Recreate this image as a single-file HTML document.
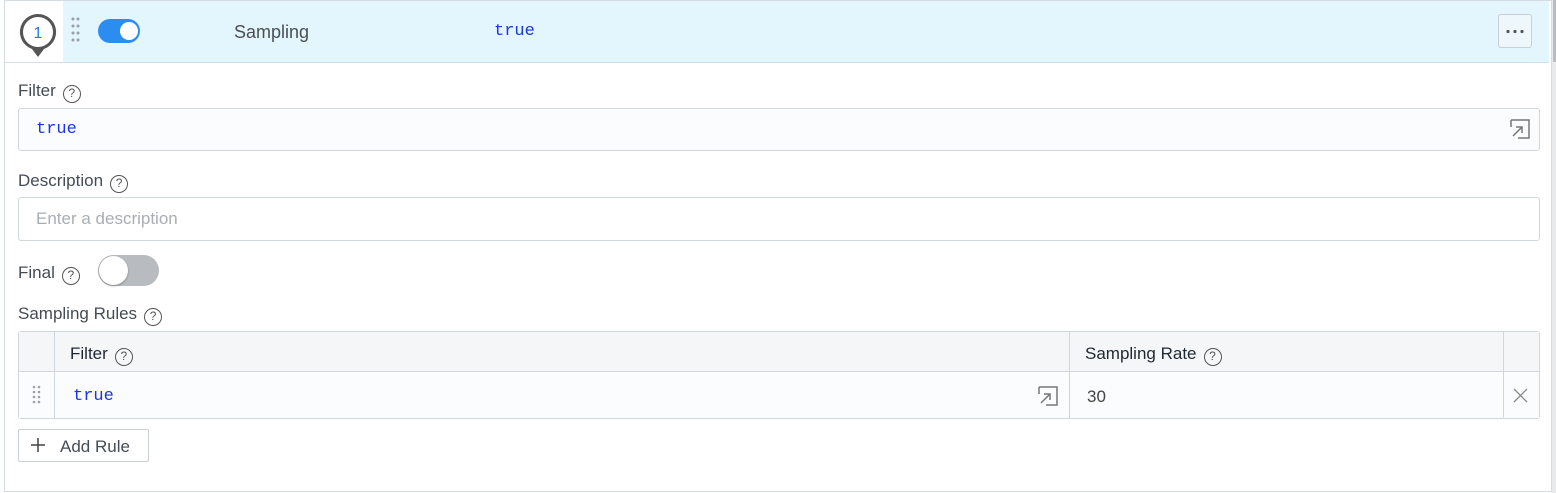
<!DOCTYPE html>
<html><head><style>
*{box-sizing:border-box;margin:0;padding:0}
body{width:1556px;height:493px;background:#fff;font-family:"Liberation Sans",sans-serif;position:relative;overflow:hidden;color:#404850}
.a{position:absolute}
.lbl{font-size:17px;color:#444c55}
.q{display:inline-block;width:18px;height:18px;border:1.4px solid #555;border-radius:50%;font-size:12px;text-align:center;line-height:15px;color:#555;vertical-align:-1px;margin-left:7px}
.inp{border:1px solid #cfd6dc;border-radius:3px;background:#fbfcfe}
.mono{font-family:"Liberation Mono",monospace;color:#1a36e0;font-size:17px}
</style></head><body>
<div class="a" style="left:4px;top:0;width:1548px;height:492px;border:1px solid #d4dbe1"></div>
<div class="a" style="left:1552px;top:0;width:4px;height:493px;background:#e8eaec"></div>
<div class="a" style="left:1553px;top:0;width:3px;height:62px;background:#b9bdc1"></div>
<div class="a" style="left:63px;top:1px;width:1486px;height:62px;background:#e3f5fd;border-bottom:1px solid #cfe0ea"></div>
<div class="a" style="left:4px;top:62px;width:59px;height:1px;background:#d4dbe1"></div>
<svg class="a" style="left:18px;top:13px" width="40" height="48" viewBox="0 0 40 48"><path d="M20 1a18 18 0 0 1 6 35l-6 8-6-8A18 18 0 0 1 20 1z" fill="#555"/><circle cx="20" cy="19" r="15" fill="#fff"/><text x="20" y="25" font-size="16" text-anchor="middle" fill="#2979d8" font-family="Liberation Sans">1</text></svg>
<svg class="a" style="left:71px;top:17px" width="10" height="28"><g fill="#9aa0a6"><circle cx="2" cy="2" r="1.5"/><circle cx="7" cy="2" r="1.5"/><circle cx="2" cy="9" r="1.5"/><circle cx="7" cy="9" r="1.5"/><circle cx="2" cy="16" r="1.5"/><circle cx="7" cy="16" r="1.5"/><circle cx="2" cy="23" r="1.5"/><circle cx="7" cy="23" r="1.5"/></g></svg>
<div class="a" style="left:98px;top:19px;width:42px;height:24px;border-radius:12px;background:#2d8cf0"></div>
<div class="a" style="left:120px;top:22px;width:18px;height:18px;border-radius:50%;background:#fff"></div>
<div class="a lbl" style="left:234px;top:22px;font-size:18px;color:#4a4f55">Sampling</div>
<div class="a mono" style="left:494px;top:22px">true</div>
<div class="a" style="left:1498px;top:14px;width:34px;height:34px;border:1px solid #c8ced3;border-radius:3px;background:#eef7fc"></div>
<svg class="a" style="left:1505px;top:29px" width="20" height="5"><g fill="#555"><circle cx="3" cy="2.5" r="1.6"/><circle cx="10" cy="2.5" r="1.6"/><circle cx="17" cy="2.5" r="1.6"/></g></svg>

<div class="a lbl" style="left:18px;top:81px">Filter<span class="q">?</span></div>
<div class="a inp" style="left:18px;top:108px;width:1522px;height:43px"></div>
<div class="a mono" style="left:36px;top:120px">true</div>
<svg class="a" style="left:1509px;top:118px" width="22" height="22"><path d="M2 2h18v18H9M2 2v7M4 18l9-9M7 9h6v6" fill="none" stroke="#777" stroke-width="1.5"/></svg>

<div class="a lbl" style="left:18px;top:171px">Description<span class="q">?</span></div>
<div class="a inp" style="left:18px;top:197px;width:1522px;height:44px;background:#fff"></div>
<div class="a" style="left:36px;top:209px;font-size:17px;color:#a8aeb4">Enter a description</div>

<div class="a lbl" style="left:18px;top:263px">Final<span class="q">?</span></div>
<div class="a" style="left:98px;top:255px;width:61px;height:31px;border-radius:16px;background:#b8bcc0"></div>
<div class="a" style="left:99px;top:256px;width:29px;height:29px;border-radius:50%;background:#fff;box-shadow:0 1px 2px rgba(0,0,0,.3)"></div>

<div class="a lbl" style="left:18px;top:304px">Sampling Rules<span class="q">?</span></div>
<div class="a" style="left:18px;top:331px;width:1522px;height:88px;border:1px solid #cfd6dc;border-radius:3px"></div>
<div class="a" style="left:19px;top:332px;width:1520px;height:40px;background:#f4f6f8;border-bottom:1px solid #cfd6dc"></div>
<div class="a" style="left:19px;top:373px;width:1520px;height:45px;background:#fbfcfe"></div>
<div class="a" style="left:54px;top:332px;width:1px;height:86px;background:#cfd6dc"></div>
<div class="a" style="left:1069px;top:332px;width:1px;height:86px;background:#cfd6dc"></div>
<div class="a" style="left:1503px;top:332px;width:1px;height:86px;background:#cfd6dc"></div>
<div class="a lbl" style="left:70px;top:344px;color:#1e2834">Filter<span class="q">?</span></div>
<div class="a lbl" style="left:1085px;top:344px;color:#1e2834">Sampling Rate<span class="q">?</span></div>
<svg class="a" style="left:32px;top:385px" width="10" height="22"><g fill="#9aa0a6"><circle cx="2" cy="2" r="1.3"/><circle cx="7" cy="2" r="1.3"/><circle cx="2" cy="7" r="1.3"/><circle cx="7" cy="7" r="1.3"/><circle cx="2" cy="12" r="1.3"/><circle cx="7" cy="12" r="1.3"/><circle cx="2" cy="17" r="1.3"/><circle cx="7" cy="17" r="1.3"/></g></svg>
<div class="a mono" style="left:73px;top:387px">true</div>
<svg class="a" style="left:1037px;top:385px" width="22" height="22"><path d="M2 2h18v18H9M2 2v7M4 18l9-9M7 9h6v6" fill="none" stroke="#777" stroke-width="1.5"/></svg>
<div class="a" style="left:1087px;top:387px;font-size:17px;color:#444">30</div>
<svg class="a" style="left:1513px;top:388px" width="15" height="15"><path d="M1 1l13 13M14 1L1 14" stroke="#888" stroke-width="1.3"/></svg>

<div class="a" style="left:18px;top:429px;width:131px;height:33px;border:1px solid #c8ced3;border-radius:2px;background:#fff"></div>
<svg class="a" style="left:30px;top:437px" width="16" height="16"><path d="M8 1v14M1 8h14" stroke="#444" stroke-width="1.5"/></svg>
<div class="a lbl" style="left:60px;top:437px">Add Rule</div>
</body></html>
